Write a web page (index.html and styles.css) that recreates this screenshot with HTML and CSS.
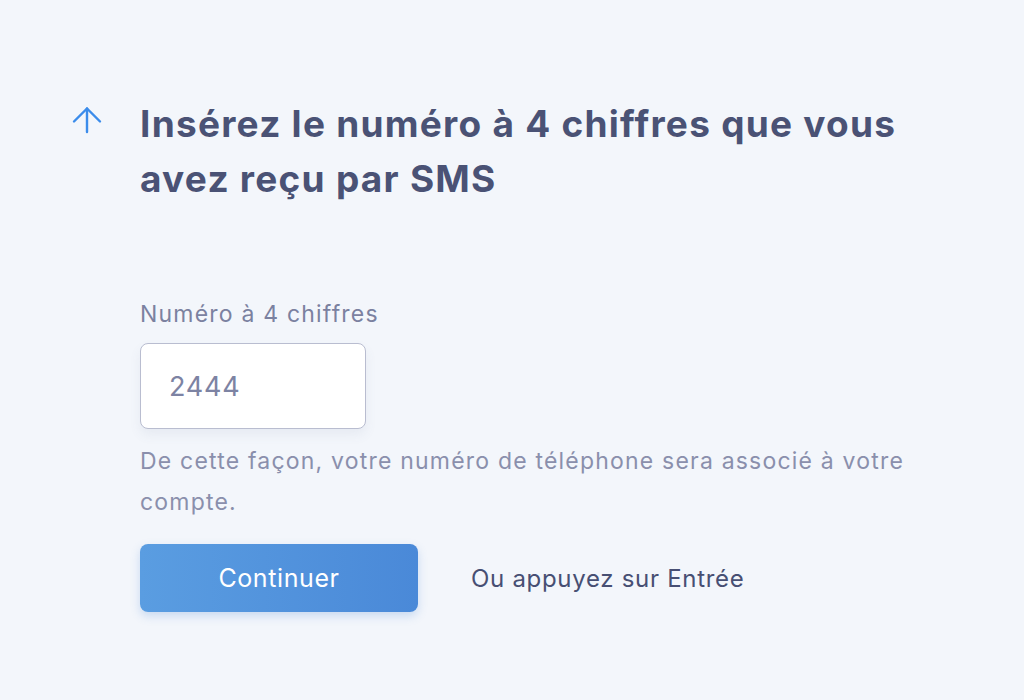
FILE: index.html
```html
<!DOCTYPE html>
<html lang="fr">
<head>
<meta charset="utf-8">
<link rel="stylesheet" href="styles.css">
</head>
<body>
<main class="page">
  <div class="step">
    <div class="icon">
      <svg width="30" height="28" viewBox="0 0 30 28" fill="none" stroke="#3b8ceb" stroke-width="2.4" stroke-linecap="round" stroke-linejoin="round">
        <path d="M15 26V2.5"/>
        <path d="M2 15.5L15 2.5l13 13"/>
      </svg>
    </div>
    <div class="content">
      <h1 class="title">Insérez le numéro à 4 chiffres que vous avez reçu par SMS</h1>
      <label class="label" for="code">Numéro à 4 chiffres</label>
      <input class="input" id="code" type="text" value="2444">
      <p class="help">De cette façon, votre numéro de téléphone sera associé à votre compte.</p>
      <div class="actions">
        <button class="btn">Continuer</button>
        <span class="hint">Ou appuyez sur Entrée</span>
      </div>
    </div>
  </div>
</main>
</body>
</html>
```

FILE: styles.css
```css
html, body {
  margin: 0;
  padding: 0;
  background: #f3f6fb;
}
body {
  font-family: Inter, "Noto Sans", sans-serif;
  width: 1024px;
  height: 700px;
  overflow: hidden;
}
.page {
  padding: 96px 0 0 72px;
}
.step {
  display: flex;
  gap: 38px;
}
.icon {
  padding-top: 10px;
  width: 30px;
  flex: none;
}
.icon svg { display: block; }
.content {
  width: 790px;
}
.title {
  margin: 0;
  font-size: 37px;
  line-height: 55px;
  font-weight: 700;
  color: #4a5275;
  letter-spacing: 1.25px;
  max-width: 780px;
}
.label {
  display: block;
  margin-top: 93px;
  font-size: 23px;
  line-height: 30px;
  letter-spacing: 1.2px;
  color: #7b81a0;
}
.input {
  display: block;
  box-sizing: border-box;
  margin-top: 14px;
  width: 226px;
  height: 86px;
  border: 1.5px solid #b9bdd0;
  border-radius: 8px;
  background: #fff;
  box-shadow: 0 6px 12px rgba(90, 100, 140, 0.08);
  padding: 0 28px;
  font-family: inherit;
  font-size: 27px;
  letter-spacing: 0.8px;
  color: #7d83a3;
  outline: none;
}
.help {
  margin: 12px 0 0;
  font-size: 23px;
  line-height: 41px;
  letter-spacing: 1.2px;
  color: #8a8fac;
  max-width: 780px;
}
.actions {
  display: flex;
  align-items: center;
  gap: 53px;
  margin-top: 21px;
}
.btn {
  width: 278px;
  height: 68px;
  border: none;
  border-radius: 8px;
  background: linear-gradient(90deg, #5a9de1, #4a89d8);
  box-shadow: 0 4px 10px rgba(74, 137, 216, 0.25);
  color: #fff;
  font-family: inherit;
  font-size: 25px;
  letter-spacing: 0.6px;
  cursor: pointer;
}
.hint {
  font-size: 24px;
  letter-spacing: 0.7px;
  color: #474f73;
}
```
